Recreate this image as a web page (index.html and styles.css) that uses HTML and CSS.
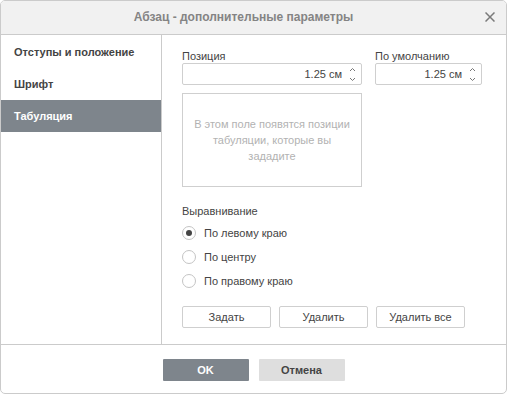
FILE: index.html
```html
<!DOCTYPE html>
<html>
<head>
  <meta charset="utf-8">
  <title>Абзац - дополнительные параметры</title>
  <link rel="stylesheet" href="styles.css">
</head>
<body>
  <div class="dialog">
    <div class="header">
      Абзац - дополнительные параметры
      <span class="close">
        <svg width="10" height="10" viewBox="0 0 10 10"><path d="M0.5 0.5L9.5 9.5M9.5 0.5L0.5 9.5" stroke="#7a7a7a" stroke-width="1.5" fill="none"/></svg>
      </span>
    </div>

    <div class="main">
      <ul class="side">
        <li>Отступы и положение</li>
        <li>Шрифт</li>
        <li class="active">Табуляция</li>
      </ul>

      <div class="content">
        <div class="row">
          <div class="field pos">
            <label>Позиция</label>
            <div class="spin">
              <span class="val">1.25 см</span>
              <span class="arrows">
                <svg width="7" height="5" viewBox="0 0 7 5"><path d="M1 4L3.5 1.5L6 4" stroke="#777" fill="none"/></svg>
                <svg width="7" height="5" viewBox="0 0 7 5"><path d="M1 1L3.5 3.5L6 1" stroke="#777" fill="none"/></svg>
              </span>
            </div>
          </div>
          <div class="field def">
            <label>По умолчанию</label>
            <div class="spin">
              <span class="val">1.25 см</span>
              <span class="arrows">
                <svg width="7" height="5" viewBox="0 0 7 5"><path d="M1 4L3.5 1.5L6 4" stroke="#777" fill="none"/></svg>
                <svg width="7" height="5" viewBox="0 0 7 5"><path d="M1 1L3.5 3.5L6 1" stroke="#777" fill="none"/></svg>
              </span>
            </div>
          </div>
        </div>

        <div class="tablist">В этом поле появятся позиции табуляции, которые вы зададите</div>

        <div class="caption">Выравнивание</div>
        <div class="radios">
          <div class="radio checked"><span class="dot"></span>По левому краю</div>
          <div class="radio"><span class="dot"></span>По центру</div>
          <div class="radio"><span class="dot"></span>По правому краю</div>
        </div>

        <div class="btns">
          <button>Задать</button>
          <button>Удалить</button>
          <button>Удалить все</button>
        </div>
      </div>
    </div>

    <div class="footer">
      <button class="ok">OK</button>
      <button class="cancel">Отмена</button>
    </div>
  </div>
</body>
</html>
```

FILE: styles.css
```css
body { margin: 0; background: #fff; font-family: "Liberation Sans", Arial, sans-serif; font-size: 11px; color: #444; }

.dialog {
  width: 507px;
  height: 394px;
  box-sizing: border-box;
  border: 1px solid #cbcbcb;
  border-radius: 5px;
  display: flex;
  flex-direction: column;
  overflow: hidden;
}

.header {
  position: relative;
  height: 33px;
  line-height: 33px;
  padding-right: 20px;
  background: #f1f1f1;
  border-bottom: 1px solid #cbcbcb;
  text-align: center;
  font-size: 12px;
  font-weight: bold;
  color: #848484;
}
.close {
  position: absolute;
  right: 11px;
  top: 11px;
  width: 10px;
  height: 10px;
  line-height: 0;
}

.main {
  display: flex;
  height: 309px;
  border-bottom: 1px solid #cbcbcb;
}

.side {
  list-style: none;
  margin: 0;
  padding: 1px 0 0;
  width: 160px;
  border-right: 1px solid #cbcbcb;
}
.side li {
  height: 32px;
  line-height: 32px;
  padding-left: 13px;
  font-weight: bold;
  color: #444;
}
.side li.active {
  background: #7e858c;
  color: #fff;
}

.content {
  padding: 14px 0 0 20px;
}

.row { display: flex; gap: 13px; }
.field label { display: block; line-height: 14px; color: #444; }
.pos .spin { width: 180px; }
.def .spin { width: 107px; }

.spin {
  height: 22px;
  box-sizing: border-box;
  border: 1px solid #cfcfcf;
  border-radius: 2px;
  display: flex;
  align-items: center;
  justify-content: flex-end;
}
.spin .val { padding-right: 7px; font-size: 11px; color: #444; }
.arrows {
  display: flex;
  flex-direction: column;
  gap: 5px;
  width: 7px;
  margin-right: 5px;
}
.arrows svg { display: block; }

.tablist {
  margin-top: 8px;
  width: 180px;
  height: 94px;
  box-sizing: border-box;
  border: 1px solid #cfcfcf;
  display: flex;
  align-items: center;
  justify-content: center;
  text-align: center;
  padding: 0 8px;
  color: #b2b2b2;
  line-height: 16px;
}

.caption { margin-top: 17px; line-height: 14px; }

.radios { margin-top: 3px; }
.radio {
  height: 24px;
  display: flex;
  align-items: center;
  gap: 8px;
}
.dot {
  width: 14px;
  height: 14px;
  box-sizing: border-box;
  border: 1px solid #c4c4c4;
  border-radius: 50%;
  display: flex;
  align-items: center;
  justify-content: center;
}
.radio.checked .dot::after {
  content: "";
  width: 6px;
  height: 6px;
  border-radius: 50%;
  background: #444;
}

.btns { display: flex; gap: 8px; margin-top: 13px; }
.btns button {
  width: 89px;
  height: 22px;
  background: #fff;
  border: 1px solid #cfcfcf;
  border-radius: 2px;
  font-family: inherit;
  font-size: 11px;
  color: #444;
  padding: 0;
}

.footer {
  flex: 1;
  display: flex;
  justify-content: center;
  gap: 10px;
  padding-top: 14px;
}
.footer button {
  width: 86px;
  height: 22px;
  border: none;
  border-radius: 1px;
  font-family: inherit;
  font-size: 11px;
  font-weight: bold;
  padding: 0;
}
.ok { background: #7e858c; color: #fff; }
.cancel { background: #dedede; color: #444; }
```
